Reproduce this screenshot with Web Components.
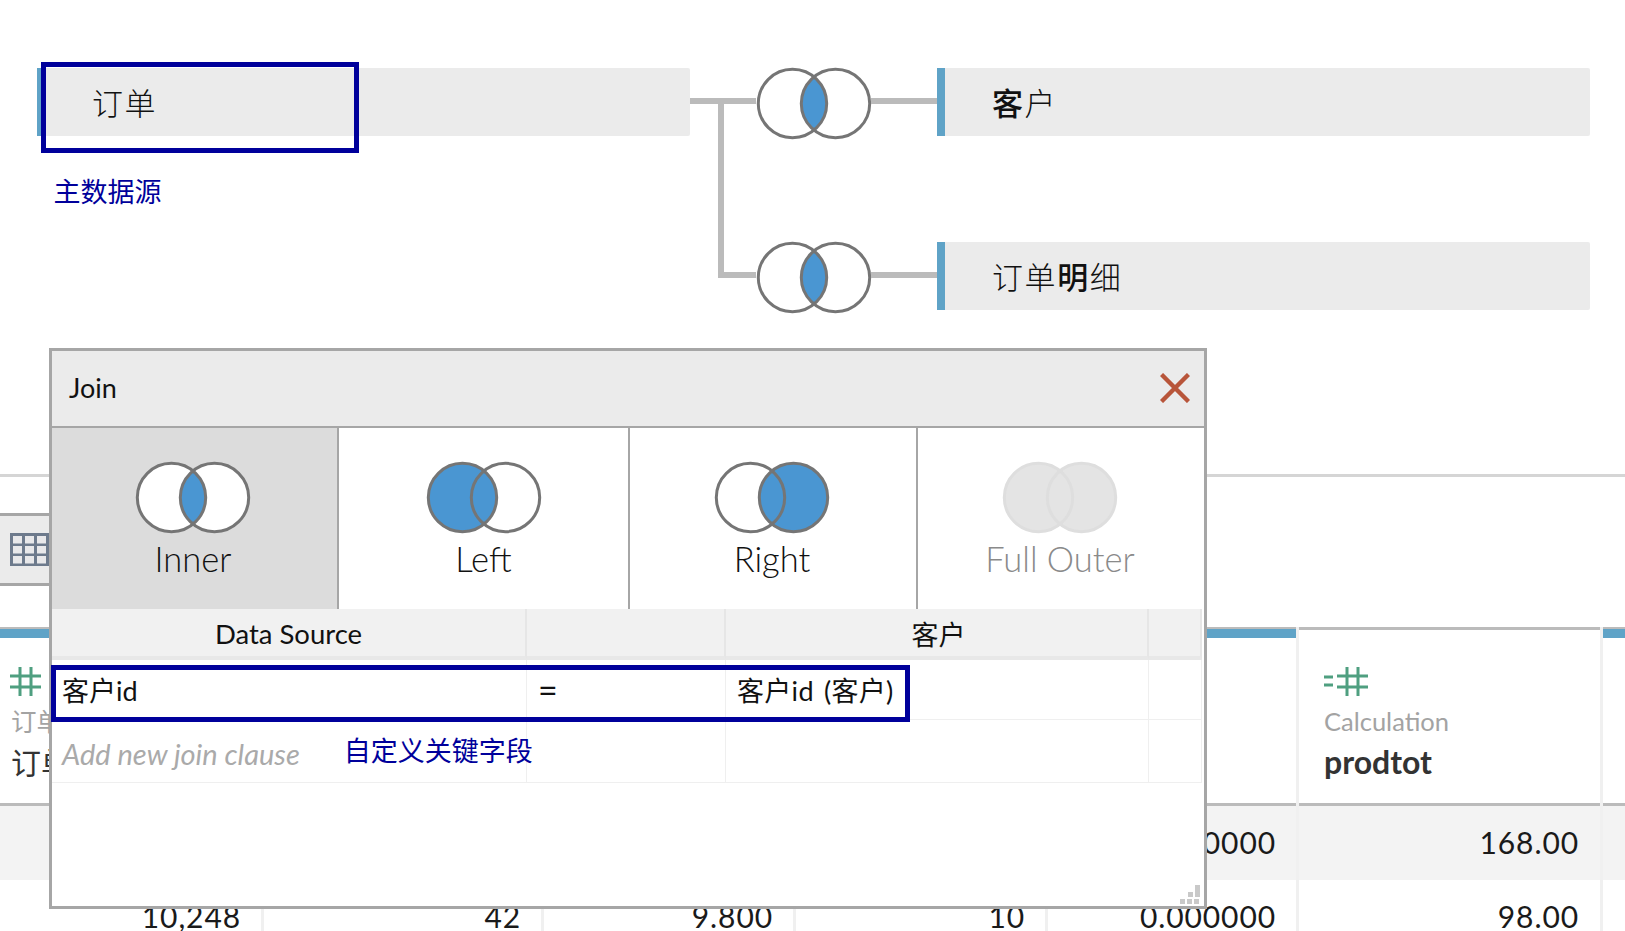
<!DOCTYPE html>
<html lang="zh"><head><meta charset="utf-8"><title>Join</title>
<style>
html,body{margin:0;padding:0;height:931px;overflow:hidden;background:#fff;font-family:"Lato","Noto Sans CJK SC",sans-serif;color:#111}
</style></head><body>
<tableau-page>
  <join-diagram>
    <div slot="first">
      <table-node selected>订单</table-node>
      <node-note>主数据源</node-note>
    </div>
    <div slot="row1"><join-link></join-link><join-venn mode="inner"></join-venn><join-link></join-link><table-node><b>客</b>户</table-node></div>
    <div slot="row2"><join-elbow></join-elbow><join-venn mode="inner"></join-venn><join-link></join-link><table-node>订单<b>明</b>细</table-node></div>
  </join-diagram>
  <view-bar></view-bar>
  <data-grid>
    <grid-col head="blue" kind="num" sub="订单" name="订单" v2="10,248"></grid-col>
    <grid-col head="blue" v2="42"></grid-col>
    <grid-col head="blue" v2="9.800"></grid-col>
    <grid-col head="blue" v2="10"></grid-col>
    <grid-col head="blue" v1="0.000000" v2="0.000000"></grid-col>
    <grid-col kind="calc" sub="Calculation" name="prodtot" v1="168.00" v2="98.00"></grid-col>
    <grid-col head="blue" last></grid-col>
  </data-grid>
  <join-dialog>
    <join-type slot="types" mode="inner" active>Inner</join-type>
    <join-type slot="types" mode="left">Left</join-type>
    <join-type slot="types" mode="right">Right</join-type>
    <join-type slot="types" mode="full" disabled>Full Outer</join-type>
  </join-dialog>
</tableau-page>
<script>
function def(name, css, html){
  customElements.define(name, class extends HTMLElement{
    constructor(){super();this.attachShadow({mode:'open'});}
    connectedCallback(){
      const h = typeof html==='function'?html(this):html;
      this.shadowRoot.innerHTML='<style>'+css+'</style>'+h;
    }
  });
}
const BLUE='#4a96d2', ST='#757575';
def('tableau-page',':host{display:block;position:relative;width:1625px;height:931px;overflow:hidden}','<slot></slot>');
def('join-diagram',`:host{display:block;height:474px;position:relative}
 .r{display:flex;height:71px}
 .r1{padding-top:68px;padding-left:37px}
 .r2{margin-top:103px;padding-left:718px}
 ::slotted(div){display:flex}
 ::slotted([slot=first]){flex-direction:column;width:653px}`,
 `<div class="r r1"><slot name="first"></slot><slot name="row1"></slot></div><div class="r r2"><slot name="row2"></slot></div>`);
def('table-node',`:host{display:flex;align-items:center;box-sizing:border-box;width:653px;height:68px;flex:none;position:relative;background:#ebebeb;border-left:8px solid #5fa3c7;border-radius:0 2px 2px 0;padding-left:47px;font-size:31px;font-weight:300;color:#111;letter-spacing:1.6px}
 ::slotted(b){font-weight:500}
 .sel{position:absolute;left:-4px;top:-6px;width:318px;height:91px;box-sizing:border-box;border:5px solid #00009b}
 span{position:relative;top:-1px}`,
 el=>'<span><slot></slot></span>'+(el.hasAttribute('selected')?'<div class="sel"></div>':''));
def('node-note',':host{display:block;margin:36px 0 0 16.5px;line-height:40px;font-size:27px;color:#00009b}','<slot></slot>');
def('join-link',':host{display:block;width:66px;height:6px;margin-top:30px;background:#bbb;flex:none}','');
def('join-elbow',':host{display:block;box-sizing:border-box;width:38px;height:180px;margin-top:-144px;border-left:6px solid #bbb;border-bottom:6px solid #bbb;flex:none}','');
def('join-venn',':host{display:block;width:114px;height:71px;flex:none;margin-left:.5px;margin-right:.5px}svg{display:block;overflow:visible}',el=>{
  const m=el.getAttribute('mode');
  const lens='M57 8.6A34.2 34.2 0 0 1 57 62.4A34.2 34.2 0 0 1 57 8.6Z';
  let s=ST,a='#fff',b='#fff',l=BLUE;
  if(m==='left'){a=BLUE;b='none';l=BLUE}
  if(m==='right'){b=BLUE;a='none';l=BLUE}
  if(m==='full'){a=b='#e4e4e4';l='#e4e4e4';s='#dedede'}
  return `<svg width="114" height="71" viewBox="0 0 114 71"><circle cx="35.5" cy="35.5" r="34.2" fill="${a}"/><circle cx="78.5" cy="35.5" r="34.2" fill="${b}"/><path d="${lens}" fill="${l}"/><circle cx="35.5" cy="35.5" r="34.2" fill="none" stroke="${s}" stroke-width="3"/><circle cx="78.5" cy="35.5" r="34.2" fill="none" stroke="${s}" stroke-width="3"/></svg>`;
});
def('view-bar',`:host{display:block;border-top:3px solid #d5d5d5;height:153px;box-sizing:border-box;padding-top:36px}
 .b{box-sizing:border-box;width:49px;height:73px;background:#ebebeb;border-top:3px solid #a6a6a6;border-bottom:3px solid #a6a6a6;padding:17px 0 0 10px;overflow:hidden}
 svg{display:block}`,
 `<div class="b"><svg width="39" height="33" viewBox="0 0 39 33"><rect width="39" height="33" fill="#6d7a8c"/>${[0,1,2].map(r=>[0,1,2].map(c=>`<rect x="${3+c*12}" y="${3+r*10}" width="9" height="7.5" fill="#e8e8ea"/>`).join('')).join('')}</svg></div>`);
def('data-grid',`:host{display:grid;grid-template-columns:264px 280px 252px 252px 251px 304px 22px;height:304px}`,'<slot></slot>');
const HASH=`<g stroke="#4f9f80" stroke-width="3" fill="none"><path d="M10 1V30M21 1V30M0 10H31M0 21H31"/></g>`;
def('grid-col',`:host{display:block;box-sizing:border-box;border-right:3px solid #f0f0f0;min-width:0}
 :host([last]){border-right:0}
 .h{box-sizing:border-box;height:179px;border-top:3px solid #bbb;border-bottom:3px solid #bbb;position:relative;padding:36px 0 0 25px}
 .bar{position:absolute;left:0;right:0;top:-1px;height:9px;background:#5fa3c7}
 .i{display:block;height:31px;margin-bottom:6px}
 .i svg{display:block}
 .s{font-size:25.5px;line-height:36px;color:#a3a3a3;white-space:nowrap}
 .n{font-size:32px;line-height:46px;font-weight:700;color:#333;white-space:nowrap}
 .v{box-sizing:border-box;height:74px;line-height:72px;text-align:right;font-size:30px;letter-spacing:.9px;padding-right:20px;color:#1a1a1a}
 :host([kind=calc]) .v{padding-right:21px}
 .o{background:#f3f3f3}
 .num .s,.num .n{margin-left:1px}
 .n.cj{font-weight:400;font-size:30px}`,
 el=>{
  const g=k=>el.getAttribute(k)||'';
  const kind=g('kind');
  let icon='';
  if(kind==='num')icon=`<svg width="31" height="31" viewBox="0 0 31 31">${HASH}</svg>`;
  if(kind==='calc')icon=`<svg width="44" height="31" viewBox="0 0 44 31"><path d="M0 11H9M0 19H9" stroke="#4f9f80" stroke-width="3"/><g transform="translate(13 0)">${HASH}</g></svg>`;
  return `<div class="h ${kind==='num'?'num':''}" style="${kind==='num'?'padding-left:10px':''}">${g('head')==='blue'?'<div class="bar"></div>':''}
   ${icon?`<span class="i">${icon}</span><div class="s">${g('sub')}</div><div class="n ${kind==='num'?'cj':''}">${g('name')}</div>`:''}</div>
   <div class="v o">${g('v1')}</div><div class="v">${g('v2')}</div>`;
 });
def('join-type',`:host{display:flex;flex-direction:column;align-items:center;box-sizing:border-box;padding-top:34px;border-right:2px solid #a6a6a6;font-size:34.5px;font-weight:300;color:#111;height:181px;text-align:center}
 :host(:last-child){border-right:0}
 :host([active]){background:#dcdcdc;padding-right:3px}
 :host([mode=right]){padding-right:2px}
 :host([disabled]){color:#8a8a8a;padding-right:2px}
 .l{line-height:40px;margin-top:6px;white-space:nowrap}`,
 el=>`<join-venn mode="${el.getAttribute('mode')}"></join-venn><div class="l"><slot></slot></div>`);
def('join-dialog',`:host{display:block;position:absolute;left:49px;top:348px;width:1158px;height:561px;box-sizing:border-box;border:3px solid #a6a6a6;background:#fff}
 .t{box-sizing:border-box;height:77px;background:#ebebeb;border-bottom:2px solid #a6a6a6;display:flex;align-items:center;justify-content:space-between;padding:0 14px 2px 17px;font-size:27px;color:#111}
 .x{display:block}
 .ty{display:grid;grid-template-columns:287px 291px 288px 286px}
 .tb{display:grid;grid-template-columns:475px 199px 423px 53px;width:1150px;position:relative}
 .hc{box-sizing:border-box;height:51px;background:#f1f1f1;border-right:2px solid #e6e6e6;border-bottom:4px solid #e8e8e8;display:flex;align-items:center;justify-content:center;font-size:27.5px;color:#111;padding-top:1px}
 .hc.zh{font-size:27px;padding-left:4px}
 .c{box-sizing:border-box;border-right:1px solid #efefef;border-bottom:1px solid #efefef;display:flex;align-items:center;font-size:27px;color:#111;padding-left:10px;white-space:nowrap}
 .r1{height:60px}.r2{height:63px}
 .eq{padding-left:11px;font-size:34px}
 .ph{font-style:italic;color:#aaa;font-size:29px;position:relative;top:2px}
 .hint{color:#00009b;font-size:27px;margin-left:44px;position:relative;top:-2px;font-style:normal}
 .sel{position:absolute;left:-1px;top:56px;width:859px;height:57px;box-sizing:border-box;border:5px solid #00009b}
 .cid{word-spacing:3px;letter-spacing:.3px;padding-left:11px}
 .grip{position:absolute;right:4px;bottom:1px;display:block}`,
 `<div class="t"><span>Join</span><svg class="x" width="30" height="30" viewBox="0 0 30 30"><path d="M1.5 1.5L28.5 28.5M28.5 1.5L1.5 28.5" stroke="#b8553a" stroke-width="4.4" fill="none"/></svg></div>
 <div class="ty"><slot name="types"></slot></div>
 <div class="tb">
  <div class="hc">Data Source</div><div class="hc"></div><div class="hc zh">客户</div><div class="hc"></div>
  <div class="c r1">客户id</div><div class="c r1 eq">=</div><div class="c r1 cid">客户id (客户)</div><div class="c r1"></div>
  <div class="c r2"><span class="ph">Add new join clause</span><span class="hint">自定义关键字段</span></div><div class="c r2"></div><div class="c r2"></div><div class="c r2"></div>
  <div class="sel"></div>
 </div>
 <svg class="grip" width="20" height="20" viewBox="0 0 20 20" fill="#c9c9c9">${[[15,0],[15,5],[8,7],[15,7],[0,14],[7,14],[14,14]].map(p=>`<rect x="${p[0]}" y="${p[1]}" width="5" height="5"/>`).join('')}</svg>`);
</script>
</body></html>
